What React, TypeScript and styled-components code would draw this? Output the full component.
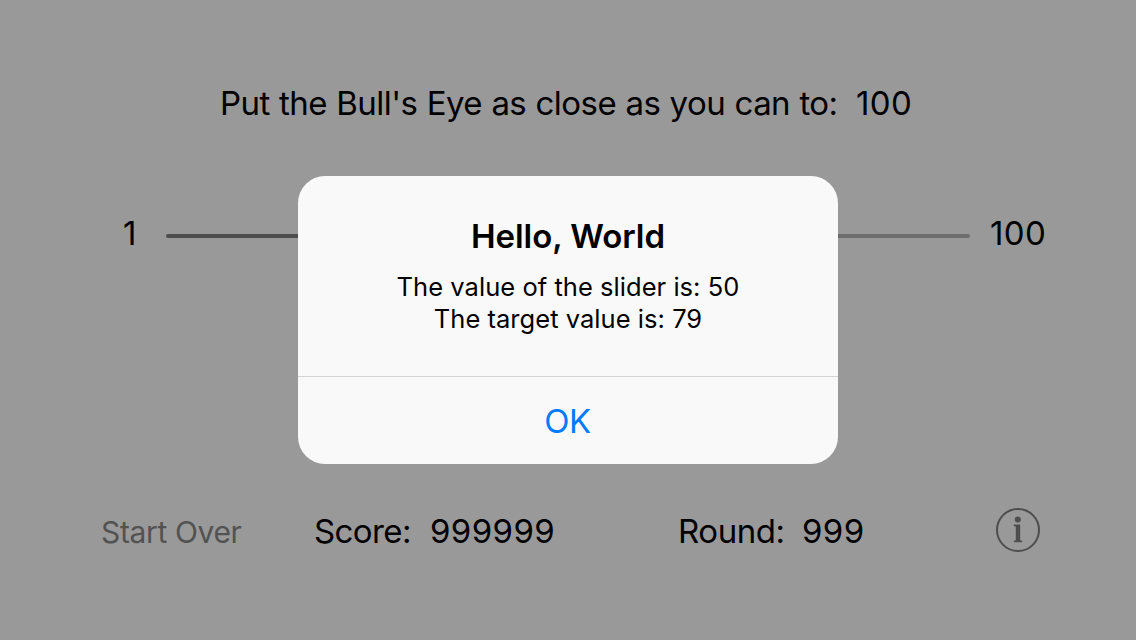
import React from 'react';
import styled, { createGlobalStyle } from 'styled-components';

const GlobalStyle = createGlobalStyle`
  body { margin: 0; overflow: hidden; }
  * { box-sizing: border-box; }
`;

const Screen = styled.main`
  position: relative;
  width: 1136px;
  height: 640px;
  display: flex;
  flex-direction: column;
  background: #999;
  color: #000;
  font-family: Inter, sans-serif;
`;

const Label = styled.span<{ $width: number; $spacing?: number }>`
  display: block;
  width: ${p => p.$width}px;
  flex-shrink: 0;
  white-space: nowrap;
  font-size: 33px;
  line-height: 40px;
  letter-spacing: ${p => p.$spacing ?? -0.45}px;
`;

const Prompt = styled(Label)`
  letter-spacing: -0.55px;
  word-spacing: 0.6px;
`;

const Value = styled(Label)`
  letter-spacing: 0.4px;
`;

const PromptRow = styled.header`
  display: flex;
  padding: 83px 0 0 220px;
  height: 213px;
`;

const SliderRow = styled.section`
  display: flex;
  align-items: flex-start;
  padding-left: 123px;
  height: 298px;
`;

const Track = styled.div`
  width: 804px;
  height: 4px;
  margin: 21px 20px 0 0;
  border-radius: 2px;
  background: linear-gradient(90deg, #4d4d4d 50%, #6d6d6d 50%);
`;

const Footer = styled.footer`
  display: flex;
  padding-left: 101px;
`;

const StartOver = styled.button`
  width: 213px;
  height: 40px;
  margin-top: 1px;
  padding: 0;
  border: 0;
  background: transparent;
  color: #525252;
  font: 400 30px/40px Inter, sans-serif;
  letter-spacing: -0.36px;
  text-align: left;
`;

const InfoIcon = styled.svg`
  display: block;
  width: 44px;
  height: 44px;
  margin-top: -3px;
`;

const Dialog = styled.div`
  position: absolute;
  left: 298px;
  top: 176px;
  width: 540px;
  height: 288px;
  border-radius: 27px;
  overflow: hidden;
  background: #f9f9f9;
  display: flex;
  flex-direction: column;
`;

const Message = styled.div`
  height: 200px;
  padding-top: 40px;
  display: flex;
  flex-direction: column;
  align-items: center;
`;

const Title = styled.h1`
  margin: 0 0 15px;
  font-size: 33px;
  line-height: 40px;
  font-weight: 600;
  letter-spacing: -0.05px;
`;

const Line = styled.p`
  margin: 0;
  font-size: 25.5px;
  line-height: 32px;
  letter-spacing: 0.04px;
`;

const OkButton = styled.button`
  height: 88px;
  padding: 0 1px 0 0;
  border: 0;
  border-top: 1px solid #d2d2d7;
  background: transparent;
  color: #007aff;
  font: 400 33px/40px Inter, sans-serif;
  letter-spacing: -0.5px;
`;

export default function App() {
  return (
    <Screen>
      <GlobalStyle />
      <PromptRow>
        <Prompt $width={636}>Put the Bull's Eye as close as you can to:</Prompt>
        <Value $width={60}>100</Value>
      </PromptRow>
      <SliderRow>
        <Label $width={43}>1</Label>
        <Track />
        <Value $width={60}>100</Value>
      </SliderRow>
      <Footer>
        <StartOver>Start Over</StartOver>
        <Label $width={116} $spacing={-0.6}>Score:</Label>
        <Value $width={248}>999999</Value>
        <Label $width={124}>Round:</Label>
        <Value $width={194}>999</Value>
        <InfoIcon viewBox="0 0 44 44">
          <circle cx="22" cy="22" r="21" fill="none" stroke="#4d4d4d" strokeWidth="2" />
          <circle cx="21.8" cy="11.6" r="3" fill="#4d4d4d" />
          <path d="M18 16.8h6v15.6l2 .5V34h-8v-1.1l2-.5V18.4l-2-.5z" fill="#4d4d4d" stroke="#4d4d4d" strokeWidth="0.4" />
        </InfoIcon>
      </Footer>
      <Dialog role="dialog">
        <Message>
          <Title>Hello, World</Title>
          <Line>The value of the slider is: 50</Line>
          <Line>The target value is: 79</Line>
        </Message>
        <OkButton>OK</OkButton>
      </Dialog>
    </Screen>
  );
}
